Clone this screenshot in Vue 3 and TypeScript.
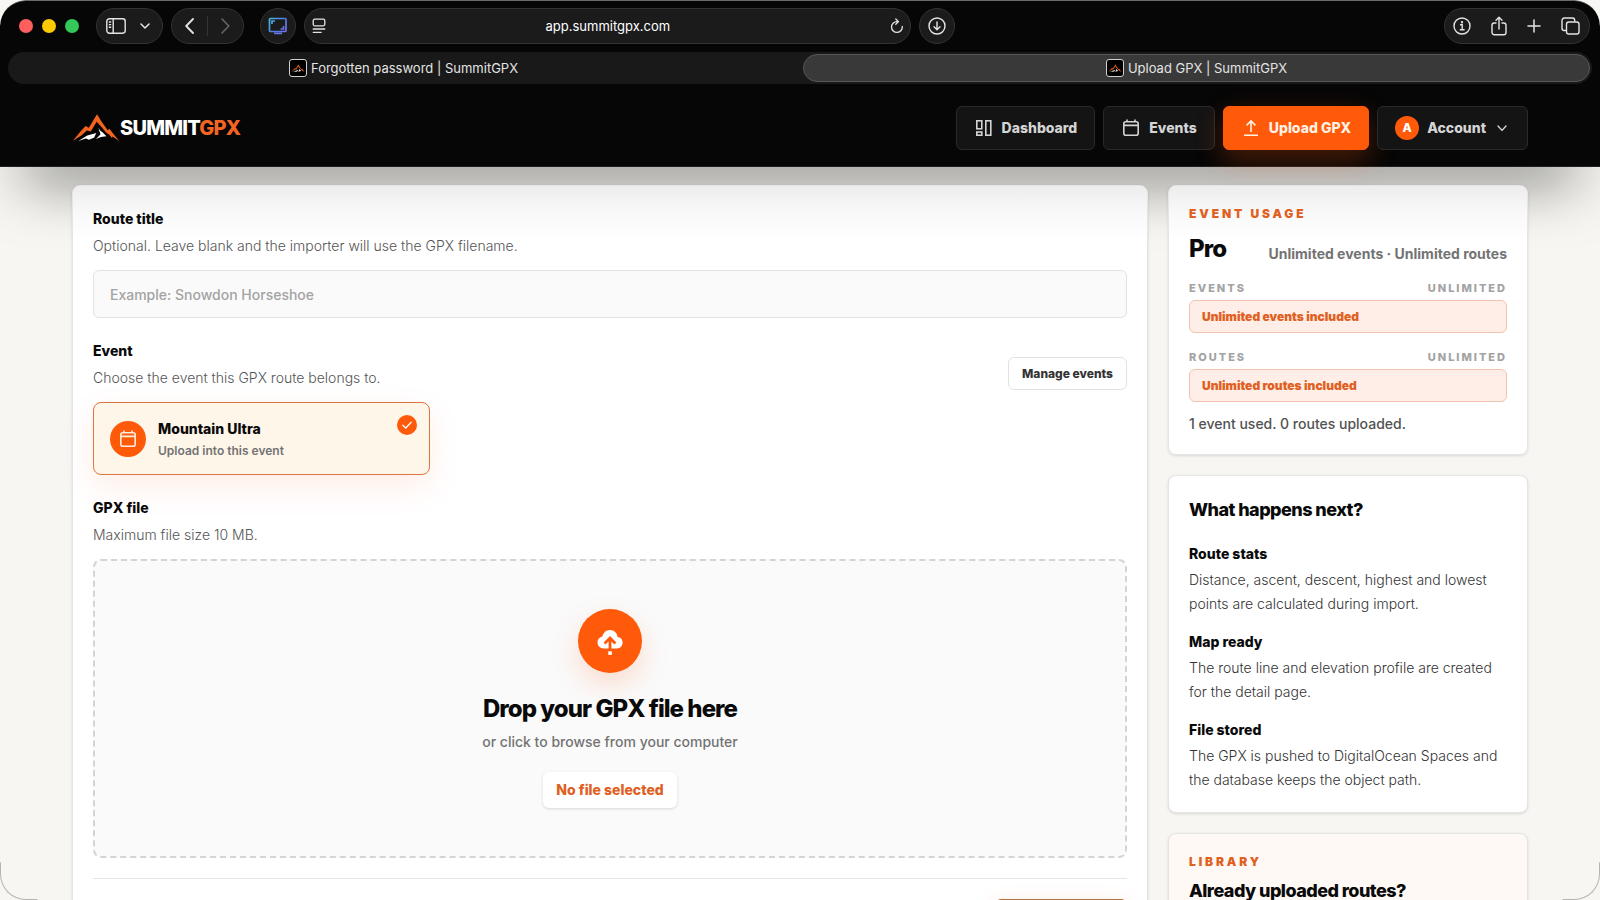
<script setup lang="ts">
import { ref } from 'vue'

interface Step {
  title: string
  text: string
}

interface Usage {
  name: string
  limit: string
  note: string
}

const address = ref('app.summitgpx.com')
const routeTitle = ref('')
const selectedEvent = ref('mountain-ultra')

const tabs = [
  { title: 'Forgotten password | SummitGPX', active: false },
  { title: 'Upload GPX | SummitGPX', active: true },
]

const usage: Usage[] = [
  { name: 'Events', limit: 'Unlimited', note: 'Unlimited events included' },
  { name: 'Routes', limit: 'Unlimited', note: 'Unlimited routes included' },
]

const steps: Step[] = [
  { title: 'Route stats', text: 'Distance, ascent, descent, highest and lowest points are calculated during import.' },
  { title: 'Map ready', text: 'The route line and elevation profile are created for the detail page.' },
  { title: 'File stored', text: 'The GPX is pushed to DigitalOcean Spaces and the database keeps the object path.' },
]
</script>

<template>
  <div class="window">
    <div class="chrome">
      <div class="toolbar">
        <div class="lights"><i class="red"></i><i class="yellow"></i><i class="green"></i></div>
        <div class="pill sidebar-pill">
          <button type="button" aria-label="Sidebar">
            <svg width="20" height="16" viewBox="0 0 20 16" fill="none" stroke="currentColor" stroke-width="1.4"><rect x="0.8" y="0.8" width="18.4" height="14.4" rx="2.6" /><path d="M7.2 1v14M2.8 4h2.4M2.8 6.6h2.4M2.8 9.2h2.4" /></svg>
          </button>
          <button type="button" aria-label="Tab groups">
            <svg width="10" height="6" viewBox="0 0 10 6" fill="none" stroke="currentColor" stroke-width="1.5" stroke-linecap="round" stroke-linejoin="round"><path d="M1 1l4 4 4-4" /></svg>
          </button>
        </div>
        <div class="pill history-pill">
          <button type="button" aria-label="Back">
            <svg width="9" height="16" viewBox="0 0 9 16" fill="none" stroke="currentColor" stroke-width="1.8" stroke-linecap="round" stroke-linejoin="round"><path d="M8 1L1.200 8 8 15" /></svg>
          </button>
          <button type="button" class="dim" aria-label="Forward">
            <svg width="9" height="16" viewBox="0 0 9 16" fill="none" stroke="currentColor" stroke-width="1.6" stroke-linecap="round" stroke-linejoin="round"><path d="M1 1l6.800 7L1 15" /></svg>
          </button>
        </div>
        <button type="button" class="pill round extension" aria-label="Screen extension">
          <svg width="20" height="18" viewBox="0 0 20 18" fill="none" stroke="url(#ext)" stroke-width="1.7">
            <defs><linearGradient id="ext" gradientUnits="userSpaceOnUse" x1="0" y1="0" x2="20" y2="18"><stop offset="0" stop-color="#45c4d8" /><stop offset="0.5" stop-color="#4a7fe6" /><stop offset="1" stop-color="#8c6af0" /></linearGradient></defs>
            <rect x="1.500" y="1.500" width="16.500" height="13" rx="1" />
            <path d="M4 7V4h3M15.500 9v3h-3M6 16.400h8" />
          </svg>
        </button>
        <div class="pill address">
          <svg width="14" height="16" viewBox="0 0 14 16" fill="none" stroke="currentColor" stroke-width="1.3" stroke-linecap="round"><rect x="1.200" y="1.200" width="11.600" height="6.600" rx="1.500" /><path d="M1.200 11h11.600M1.200 14.300h8" /></svg>
          <input v-model="address" type="text" aria-label="Address" />
          <button type="button" aria-label="Reload">
            <svg width="14" height="16" viewBox="0 0 14 16" fill="none" stroke="currentColor" stroke-width="1.300" stroke-linecap="round" stroke-linejoin="round"><path d="M12.300 8.500A5.400 5.400 0 1 1 7 3.600h1.200M5.800 1l2.700 2.600L5.800 6.200" /></svg>
          </button>
        </div>
        <button type="button" class="pill round" aria-label="Downloads">
          <svg width="18" height="18" viewBox="0 0 18 18" fill="none" stroke="currentColor" stroke-width="1.400" stroke-linecap="round" stroke-linejoin="round"><circle cx="9" cy="9" r="8" /><path d="M9 5v7.500M6 9.800l3 3 3-3" /></svg>
        </button>
        <div class="spacer"></div>
        <div class="pill actions">
          <button type="button" aria-label="Info">
            <svg width="18" height="18" viewBox="0 0 18 18" fill="none" stroke="currentColor" stroke-width="1.400" stroke-linecap="round"><circle cx="9" cy="9" r="8" /><path d="M7.500 7.800h1.700v4.700M7.300 12.700h3.800" /><circle cx="9" cy="5.200" r="0.500" /></svg>
          </button>
          <button type="button" aria-label="Share">
            <svg width="16" height="20" viewBox="0 0 16 20" fill="none" stroke="currentColor" stroke-width="1.400" stroke-linecap="round" stroke-linejoin="round"><path d="M5 7H3.200A2.200 2.200 0 0 0 1 9.200v7.300a2.200 2.200 0 0 0 2.200 2.200h9.600a2.200 2.200 0 0 0 2.200-2.200V9.200A2.200 2.200 0 0 0 12.800 7H11M8 13V1.500M5 4.300l3-3 3 3" /></svg>
          </button>
          <button type="button" aria-label="New tab">
            <svg width="14" height="14" viewBox="0 0 14 14" fill="none" stroke="currentColor" stroke-width="1.500" stroke-linecap="round"><path d="M7 1v12M1 7h12" /></svg>
          </button>
          <button type="button" aria-label="All tabs">
            <svg width="19" height="18" viewBox="0 0 19 18" fill="none" stroke="currentColor" stroke-width="1.400" stroke-linejoin="round"><rect x="5.500" y="5" width="12.500" height="12" rx="2.200" /><path d="M5.200 13.500H3.200A2.200 2.200 0 0 1 1 11.300V3.200A2.200 2.200 0 0 1 3.200 1h8.300a2.200 2.200 0 0 1 2.200 2.200v1.500" /></svg>
          </button>
        </div>
      </div>
      <div class="tabs">
        <button v-for="tab in tabs" :key="tab.title" type="button" class="tab" :class="{ active: tab.active }">
          <span class="favicon">
            <svg width="14" height="9" viewBox="216 342 146 86"><path fill="#f4641e" d="M218 425l39-46 11 5 24-41 33 49 7-5 28 38-22-17-3 4-15-16-29-35-19 35-12-3z" /><path fill="#fff" d="M236 425l26-17 28-8-6 14-16 6-10-4zM296 386l25 24-31 8 12-14z" /></svg>
          </span>
          {{ tab.title }}
        </button>
      </div>
    </div>

    <header class="site-header">
      <a href="#" class="brand">
        <svg width="48" height="28" viewBox="216 342 146 86"><path fill="#f4641e" d="M218 424L242 395 257 379 267 384 292 343 306 365 325 392 330 387 346 407 360 425 340 411 338 416 329 405 320 399 306 382 291 366 273 396 261 393 244 408z" /><path fill="#fff" d="M235 425L262 408 290 400 283 415 267 421 258 417zM296 385L304 395 309 398 321 410 304 413 289 419 303 404z" /></svg>
        <span class="wordmark">SUMMIT<b>GPX</b></span>
      </a>
      <nav>
        <a href="#" class="nav-link">
          <svg width="20" height="20" viewBox="0 0 20 20" fill="none" stroke="currentColor" stroke-width="1.600"><rect x="2.800" y="2.800" width="5" height="8" /><rect x="2.800" y="14" width="5" height="3.200" /><rect x="11.800" y="2.800" width="5" height="14.400" /></svg>
          Dashboard
        </a>
        <a href="#" class="nav-link">
          <svg width="20" height="20" viewBox="0 0 20 20" fill="none" stroke="currentColor" stroke-width="1.600"><rect x="2.800" y="3.800" width="14.400" height="13.400" rx="2" /><path d="M3 7.400h14M6 1.600v2.400M14 1.600v2.400" /></svg>
          Events
        </a>
        <a href="#" class="nav-link primary">
          <svg width="20" height="20" viewBox="0 0 20 20" fill="none" stroke="currentColor" stroke-width="1.600"><path d="M10 14V3.200M5.600 7.400L10 3l4.400 4.400M3 17.200h14" /></svg>
          Upload GPX
        </a>
        <button type="button" class="nav-link">
          <span class="avatar">A</span>
          Account
          <svg width="16" height="16" viewBox="0 0 16 16" fill="none" stroke="currentColor" stroke-width="1.400" stroke-linecap="round" stroke-linejoin="round"><path d="M4 6l4 4.400L12 6" /></svg>
        </button>
      </nav>
    </header>

    <main class="page">
      <form class="card form" @submit.prevent>
        <section>
          <label class="label" for="route-title">Route title</label>
          <p class="help">Optional. Leave blank and the importer will use the GPX filename.</p>
          <input id="route-title" v-model="routeTitle" class="field" type="text" placeholder="Example: Snowdon Horseshoe" />
        </section>

        <section>
          <div class="section-head">
            <div>
              <h2 class="label">Event</h2>
              <p class="help">Choose the event this GPX route belongs to.</p>
            </div>
            <button type="button" class="manage">Manage events</button>
          </div>
          <div class="events">
            <label class="event">
              <input v-model="selectedEvent" class="visually-hidden" type="radio" name="event" value="mountain-ultra" />
              <span class="event-icon">
                <svg width="20" height="20" viewBox="0 0 20 20" fill="none" stroke="currentColor" stroke-width="1.600"><rect x="2.800" y="3.800" width="14.400" height="13.400" rx="2" /><path d="M3 7.400h14M6 1.600v2.400M14 1.600v2.400" /></svg>
              </span>
              <span class="event-text">
                <strong>Mountain Ultra</strong>
                <small>Upload into this event</small>
              </span>
              <span class="tick">
                <svg width="12" height="12" viewBox="0 0 12 12" fill="none" stroke="currentColor" stroke-width="1.300" stroke-linecap="round" stroke-linejoin="round"><path d="M1.800 6.200l3 2.800 5.400-5.800" /></svg>
              </span>
            </label>
          </div>
        </section>

        <section>
          <h2 class="label">GPX file</h2>
          <p class="help">Maximum file size 10 MB.</p>
          <label class="dropzone">
            <input class="visually-hidden" type="file" accept=".gpx" />
            <span class="drop-icon">
              <svg width="28" height="28" viewBox="0 0 28 28"><path fill="#fff" d="M7.500 21.500A6 6 0 0 1 1.500 15.500c0-3 2-5.300 4.800-5.900C7.300 5.800 10 3 14 3c4.300 0 7 3 7.600 7 3 .2 5 2.500 5 5.600 0 3.300-2.500 5.900-5.600 5.900z" /><path fill="none" stroke="#ff5a0a" stroke-width="2.800" d="M14 23V11.800M8.600 16.400L14 11l5.400 5.400" /><path fill="#fff" d="M12.300 24.300h3.600v3.600h-3.600z" /></svg>
            </span>
            <strong>Drop your GPX file here</strong>
            <span class="drop-hint">or click to browse from your computer</span>
            <span class="file-name">No file selected</span>
          </label>
        </section>

        <footer class="form-footer">
          <button type="submit" class="submit" aria-label="Upload route"></button>
        </footer>
      </form>

      <aside>
        <section class="card usage">
          <h2 class="eyebrow">Event usage</h2>
          <div class="plan"><strong>Pro</strong><span>Unlimited events · Unlimited routes</span></div>
          <div v-for="item in usage" :key="item.name" class="quota">
            <div class="quota-head"><span>{{ item.name }}</span><span>{{ item.limit }}</span></div>
            <p>{{ item.note }}</p>
          </div>
          <p class="summary">1 event used. 0 routes uploaded.</p>
        </section>

        <section class="card next">
          <h2>What happens next?</h2>
          <div v-for="step in steps" :key="step.title" class="step">
            <h3>{{ step.title }}</h3>
            <p>{{ step.text }}</p>
          </div>
        </section>

        <section class="card library">
          <h2 class="eyebrow">Library</h2>
          <h3>Already uploaded routes?</h3>
        </section>
      </aside>
    </main>
    <i class="corner left"></i>
    <i class="corner right"></i>
  </div>
</template>

<style>
html,
body {
  background: #f7f6f2;
  overflow: hidden;
}
</style>

<style scoped>
.window {
  position: relative;
  height: 100vh;
  overflow: hidden;
  box-sizing: border-box;
  border-radius: 26px 26px 0 0;
  background: #f7f6f2;
  color: #0a0a0a;
  font-family: Inter, 'Liberation Sans', sans-serif;
  font-size: 14px;
  line-height: 24px;
}
.window *,
.window *::before {
  box-sizing: border-box;
}
h2,
h3,
p {
  margin: 0;
}
button,
input {
  font: inherit;
  color: inherit;
}
button {
  padding: 0;
  border: 0;
  background: none;
}
svg {
  display: block;
  flex: none;
}
a {
  text-decoration: none;
  color: inherit;
}
.visually-hidden {
  position: absolute;
  width: 1px;
  height: 1px;
  opacity: 0;
}

/* Browser chrome */
.chrome {
  position: relative;
  z-index: 1;
  background: #060606;
  border-top: 1px solid #6b6b6b;
  border-radius: 26px 26px 0 0;
  padding: 7px 8px 0;
  color: #e4e4e4;
}
.toolbar {
  display: flex;
  align-items: center;
  gap: 8px;
  padding: 0 2px 0 11px;
}
.lights {
  display: flex;
  gap: 9px;
  margin-right: 9px;
}
.lights i {
  width: 14px;
  height: 14px;
  border-radius: 50%;
}
.red {
  background: #ff5f5f;
}
.yellow {
  background: #fbca05;
}
.green {
  background: #34c759;
}
.pill {
  display: flex;
  align-items: center;
  height: 36px;
  border: 1px solid #333;
  border-radius: 18px;
  background: #1b1b1b;
}
.sidebar-pill {
  width: 67px;
  padding: 0 12px 0 9px;
  justify-content: space-between;
}
.history-pill {
  width: 73px;
}
.history-pill button {
  flex: 1;
  display: flex;
  justify-content: center;
  align-items: center;
  height: 20px;
}
.dim {
  color: #686868;
  border-left: 1px solid #343434;
}
.round {
  width: 36px;
  justify-content: center;
}
.extension {
  margin-left: 8px;
}
.address {
  flex: 5 1 0;
  padding: 0 6px 0 7px;
}
.address input {
  flex: 1;
  min-width: 0;
  border: 0;
  padding: 0;
  background: none;
  text-align: center;
  font-size: 13px;
  font-weight: 400;
  color: #fff;
}
.spacer {
  flex: 4 1 0;
}
.actions {
  width: 146px;
  padding: 0 9px 0 8px;
  justify-content: space-between;
}
.tabs {
  display: flex;
  gap: 6px;
  height: 32px;
  margin-top: 8px;
  padding: 2px;
  border-radius: 16px;
  background: #191919;
}
.tab {
  flex: 1;
  display: flex;
  align-items: center;
  justify-content: center;
  gap: 4px;
  border: 1px solid transparent;
  border-radius: 14px;
  font-size: 13px;
  line-height: 20px;
  font-weight: 400;
}
.tab.active {
  background: #393939;
  border-color: #575757;
}
.favicon {
  display: flex;
  align-items: center;
  justify-content: center;
  width: 18px;
  height: 18px;
  border: 1px solid #d0d0d0;
  border-radius: 3px;
  background: #000;
}

/* Site header */
.site-header {
  display: flex;
  align-items: center;
  justify-content: space-between;
  height: 83px;
  padding: 6px 72px 0;
  background: #060606;
  border-bottom: 1px solid #1f1f1f;
  box-shadow: 0 36px 60px -24px rgba(0, 0, 0, 0.6);
}
.brand {
  display: flex;
  align-items: center;
  color: #fff;
}
.wordmark {
  font-size: 20px;
  font-weight: 800;
  letter-spacing: -0.04em;
}
.wordmark b {
  font-weight: 800;
  color: #f26522;
}
nav {
  display: flex;
  gap: 8px;
}
.nav-link {
  display: flex;
  align-items: center;
  gap: 8px;
  height: 44px;
  padding: 0 17px;
  border: 1px solid #2a2a2a;
  border-radius: 6px;
  background: #141414;
  color: #d4d4d4;
  font-weight: 800;
  line-height: 20px;
}
.primary {
  background: #ff5a0a;
  border-color: #ff5a0a;
  color: #fff1e4;
  box-shadow: 0 10px 28px rgba(255, 90, 10, 0.28);
}
.avatar {
  display: grid;
  place-items: center;
  width: 24px;
  height: 24px;
  border-radius: 50%;
  background: #ff5a0a;
  color: #fff;
  font-size: 12px;
}

/* Page */
.page {
  position: relative;
  display: grid;
  grid-template-columns: minmax(0, 1fr) 360px;
  gap: 20px;
  align-items: start;
  padding: 18px 72px;
}
.card {
  border: 1px solid #e6e5e3;
  border-radius: 8px;
  padding: 20px;
  background: #fff;
  box-shadow: 0 1px 3px rgba(0, 0, 0, 0.12);
}
.form,
.usage {
  background: linear-gradient(#ededed, #f9f9f9 28px, #fff 54px);
}
.form {
  display: grid;
  gap: 21px;
  padding-top: 21px;
}
.label {
  display: block;
  font-size: 14px;
  line-height: 23px;
  font-weight: 800;
}
.help {
  margin-top: 4px;
  font-weight: 300;
  color: #555;
}
.field {
  display: block;
  width: 100%;
  height: 48px;
  margin-top: 12px;
  padding: 0 16px;
  border: 1px solid #e2e2e2;
  border-radius: 6px;
  background: #fafafa;
  font-weight: 500;
}
.field::placeholder {
  color: #a3a3a3;
  opacity: 1;
}
.section-head {
  display: flex;
  justify-content: space-between;
  align-items: flex-end;
}
.manage {
  height: 33px;
  padding: 0 13px;
  border: 1px solid #e2e2e2;
  border-radius: 6px;
  background: #fff;
  color: #333;
  font-size: 12px;
  line-height: 16px;
  font-weight: 800;
}
.events {
  display: grid;
  grid-template-columns: repeat(3, 1fr);
  gap: 12px;
  margin-top: 12px;
}
.event {
  position: relative;
  display: flex;
  align-items: center;
  gap: 12px;
  height: 73px;
  padding: 0 16px;
  border: 1px solid #df7440;
  border-radius: 8px;
  background: #fff6ea;
  box-shadow: 0 12px 32px rgba(255, 90, 10, 0.1);
}
.event-icon {
  display: grid;
  place-items: center;
  width: 36px;
  height: 36px;
  border-radius: 50%;
  background: #ff5a0a;
  color: #ffeede;
}
.event-text {
  display: grid;
}
.event-text strong {
  line-height: 23px;
  font-weight: 800;
}
.event-text small {
  font-size: 12px;
  line-height: 21px;
  font-weight: 600;
  color: #737373;
}
.tick {
  position: absolute;
  top: 12px;
  right: 12px;
  display: grid;
  place-items: center;
  width: 20px;
  height: 20px;
  border-radius: 50%;
  background: #ff5a0a;
  color: #fff;
}
.dropzone {
  position: relative;
  display: flex;
  flex-direction: column;
  align-items: center;
  margin-top: 12px;
  padding: 48px 24px;
  border: 2px dashed #d4d4d4;
  border-radius: 8px;
  background: #fafafa;
}
.drop-icon {
  display: grid;
  place-items: center;
  width: 64px;
  height: 64px;
  border-radius: 50%;
  background: #ff5a0a;
  box-shadow: 0 12px 28px rgba(255, 90, 10, 0.18);
}
.dropzone strong {
  margin-top: 20px;
  font-size: 24px;
  line-height: 32px;
  font-weight: 800;
  letter-spacing: -0.04em;
}
.drop-hint {
  margin-top: 5px;
  font-weight: 500;
  color: #737373;
}
.file-name {
  margin-top: 18px;
  padding: 6px 13px;
  border-radius: 6px;
  background: #fff;
  box-shadow: 0 1px 3px rgba(0, 0, 0, 0.14);
  color: #e06022;
  font-weight: 800;
}
.form-footer {
  display: flex;
  justify-content: flex-end;
  margin-top: -1px;
  padding-top: 20px;
  border-top: 1px solid #e5e5e5;
}
.submit {
  width: 132px;
  height: 44px;
  border: 1px solid #b8703c;
  border-radius: 6px;
  background: #ff5a0a;
  box-shadow: 0 8px 24px rgba(255, 90, 10, 0.18);
}

/* Sidebar */
aside {
  display: grid;
  gap: 20px;
}
.eyebrow {
  font-size: 12px;
  line-height: 16px;
  font-weight: 900;
  letter-spacing: 0.24em;
  text-transform: uppercase;
  color: #e06022;
}
.plan {
  display: flex;
  align-items: flex-end;
  justify-content: space-between;
  margin-top: 11px;
}
.plan strong {
  font-size: 24px;
  line-height: 31px;
  font-weight: 800;
  letter-spacing: -0.04em;
}
.plan span {
  line-height: 20px;
  font-weight: 700;
  color: #737373;
}
.quota {
  margin-top: 16px;
}
.quota-head {
  display: flex;
  justify-content: space-between;
  font-size: 11px;
  line-height: 16px;
  font-weight: 800;
  letter-spacing: 0.18em;
  text-transform: uppercase;
  color: #a3a3a3;
}
.quota p {
  margin-top: 4px;
  padding: 8px 12px;
  border: 1px solid #f0c4ae;
  border-radius: 6px;
  background: #ffeee7;
  color: #e06022;
  font-size: 12px;
  line-height: 15px;
  font-weight: 900;
}
.summary {
  margin-top: 10px;
  font-weight: 500;
  color: #525252;
}
.usage {
  padding-bottom: 18px;
}
.next h2,
.library h3 {
  font-size: 18px;
  line-height: 28px;
  font-weight: 800;
  letter-spacing: -0.03em;
}
.next h2 {
  margin-bottom: 18px;
}
.step + .step {
  margin-top: 14px;
}
.step h3 {
  font-size: 14px;
  line-height: 24px;
  font-weight: 800;
}
.step p {
  margin-top: 2px;
  font-weight: 300;
  color: #333;
}
.library {
  background: #fff9f5;
}
.library h3 {
  margin-top: 7px;
}

/* Outline of the rounded window at the lower corners */
.corner {
  position: absolute;
  bottom: 0;
  width: 38px;
  height: 38px;
  border: 1px solid transparent;
  border-bottom-color: #b5b4b0;
}
.left {
  left: 0;
  border-left-color: #b5b4b0;
  border-bottom-left-radius: 26px;
}
.right {
  right: 0;
  border-right-color: #b5b4b0;
  border-bottom-right-radius: 26px;
}
</style>
